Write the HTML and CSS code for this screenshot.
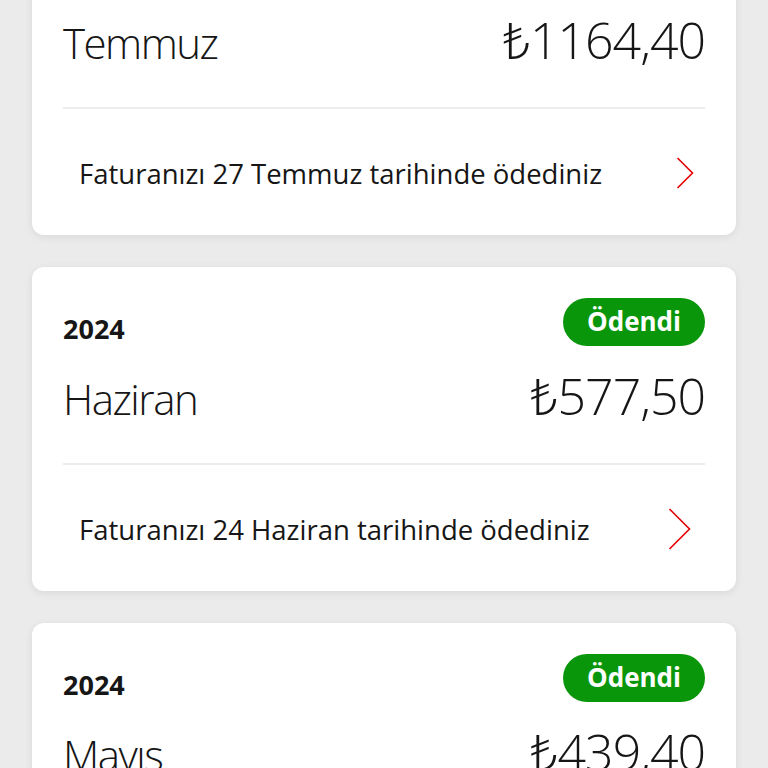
FILE: index.html
```html
<!DOCTYPE html>
<html lang="tr">
<head>
    <meta charset="UTF-8" />
    <meta name="viewport" content="width=device-width, initial-scale=1" />
    <title>Faturalarım</title>
    <link rel="stylesheet" href="styles.css">
</head>
<body>
<div class="bills">
    <div class="bill">
        <div class="bill-head">
            <div class="year">2024</div>
            <div class="badge">Ödendi</div>
        </div>
        <div class="bill-main">
            <div class="month">Temmuz</div>
            <div class="amount">₺1164,40</div>
        </div>
        <div class="bill-row">
            <span>Faturanızı 27 Temmuz tarihinde ödediniz</span>
            <svg class="chev small" viewBox="0 0 18 32"><path d="M1.5 1 L16.5 16 L1.5 31" /></svg>
        </div>
    </div>

    <div class="bill">
        <div class="bill-head">
            <div class="year">2024</div>
            <div class="badge">Ödendi</div>
        </div>
        <div class="bill-main">
            <div class="month">Haziran</div>
            <div class="amount">₺577,50</div>
        </div>
        <div class="bill-row">
            <span>Faturanızı 24 Haziran tarihinde ödediniz</span>
            <svg class="chev" viewBox="0 0 23 42"><path d="M1.5 1 L21.5 21 L1.5 41" /></svg>
        </div>
    </div>

    <div class="bill">
        <div class="bill-head">
            <div class="year">2024</div>
            <div class="badge">Ödendi</div>
        </div>
        <div class="bill-main">
            <div class="month">Mayıs</div>
            <div class="amount">₺439,40</div>
        </div>
        <div class="bill-row">
            <span>Faturanızı 26 Mayıs tarihinde ödediniz</span>
            <svg class="chev" viewBox="0 0 23 42"><path d="M1.5 1 L21.5 21 L1.5 41" /></svg>
        </div>
    </div>
</div>
</body>
</html>
```

FILE: styles.css
```css
body {
  font-family: 'Open Sans', 'Noto Sans', 'DejaVu Sans', sans-serif;
  background: #ebebeb;
  color: #161616;
  margin: 0;
  overflow: hidden;
}
.bills {
  display: flex;
  flex-direction: column;
  gap: 32px;
  padding: 0 32px;
  margin-top: -89px;
}
.bill {
  background: #fff;
  border-radius: 12px;
  box-shadow: 0 2px 8px rgba(0,0,0,0.08);
  padding: 31px 31px 0 31px;
  height: 324px;
  box-sizing: border-box;
}
.bill-head {
  display: flex;
  justify-content: space-between;
  align-items: flex-end;
  height: 48px;
}
.year {
  font-weight: 700;
  font-size: 27px;
  line-height: 1;
  margin-bottom: 4px;
}
.badge {
  background: #0a960a;
  color: #fff;
  font-weight: 700;
  font-size: 26px;
  height: 48px;
  line-height: 46px;
  padding: 0 24px;
  border-radius: 24px;
  box-sizing: border-box;
}
.bill-main {
  display: flex;
  justify-content: space-between;
  align-items: baseline;
  height: 117px;
  border-bottom: 2px solid #ececec;
}
.month {
  font-weight: 300;
  font-size: 42px;
  letter-spacing: -1.5px;
  line-height: 100px;
}
.amount {
  font-weight: 300;
  font-size: 50px;
  letter-spacing: -1px;
  line-height: 100px;
}
.bill-row {
  display: flex;
  justify-content: space-between;
  align-items: center;
  height: 126px;
  padding: 2px 14px 0 16px;
  box-sizing: border-box;
  font-size: 27.5px;
}
.chev {
  width: 23px;
  height: 42px;
  fill: none;
  stroke: #e60000;
  stroke-width: 1.6;
}
.chev.small {
  width: 18px;
  height: 32px;
  margin-right: -3px;
}
```
